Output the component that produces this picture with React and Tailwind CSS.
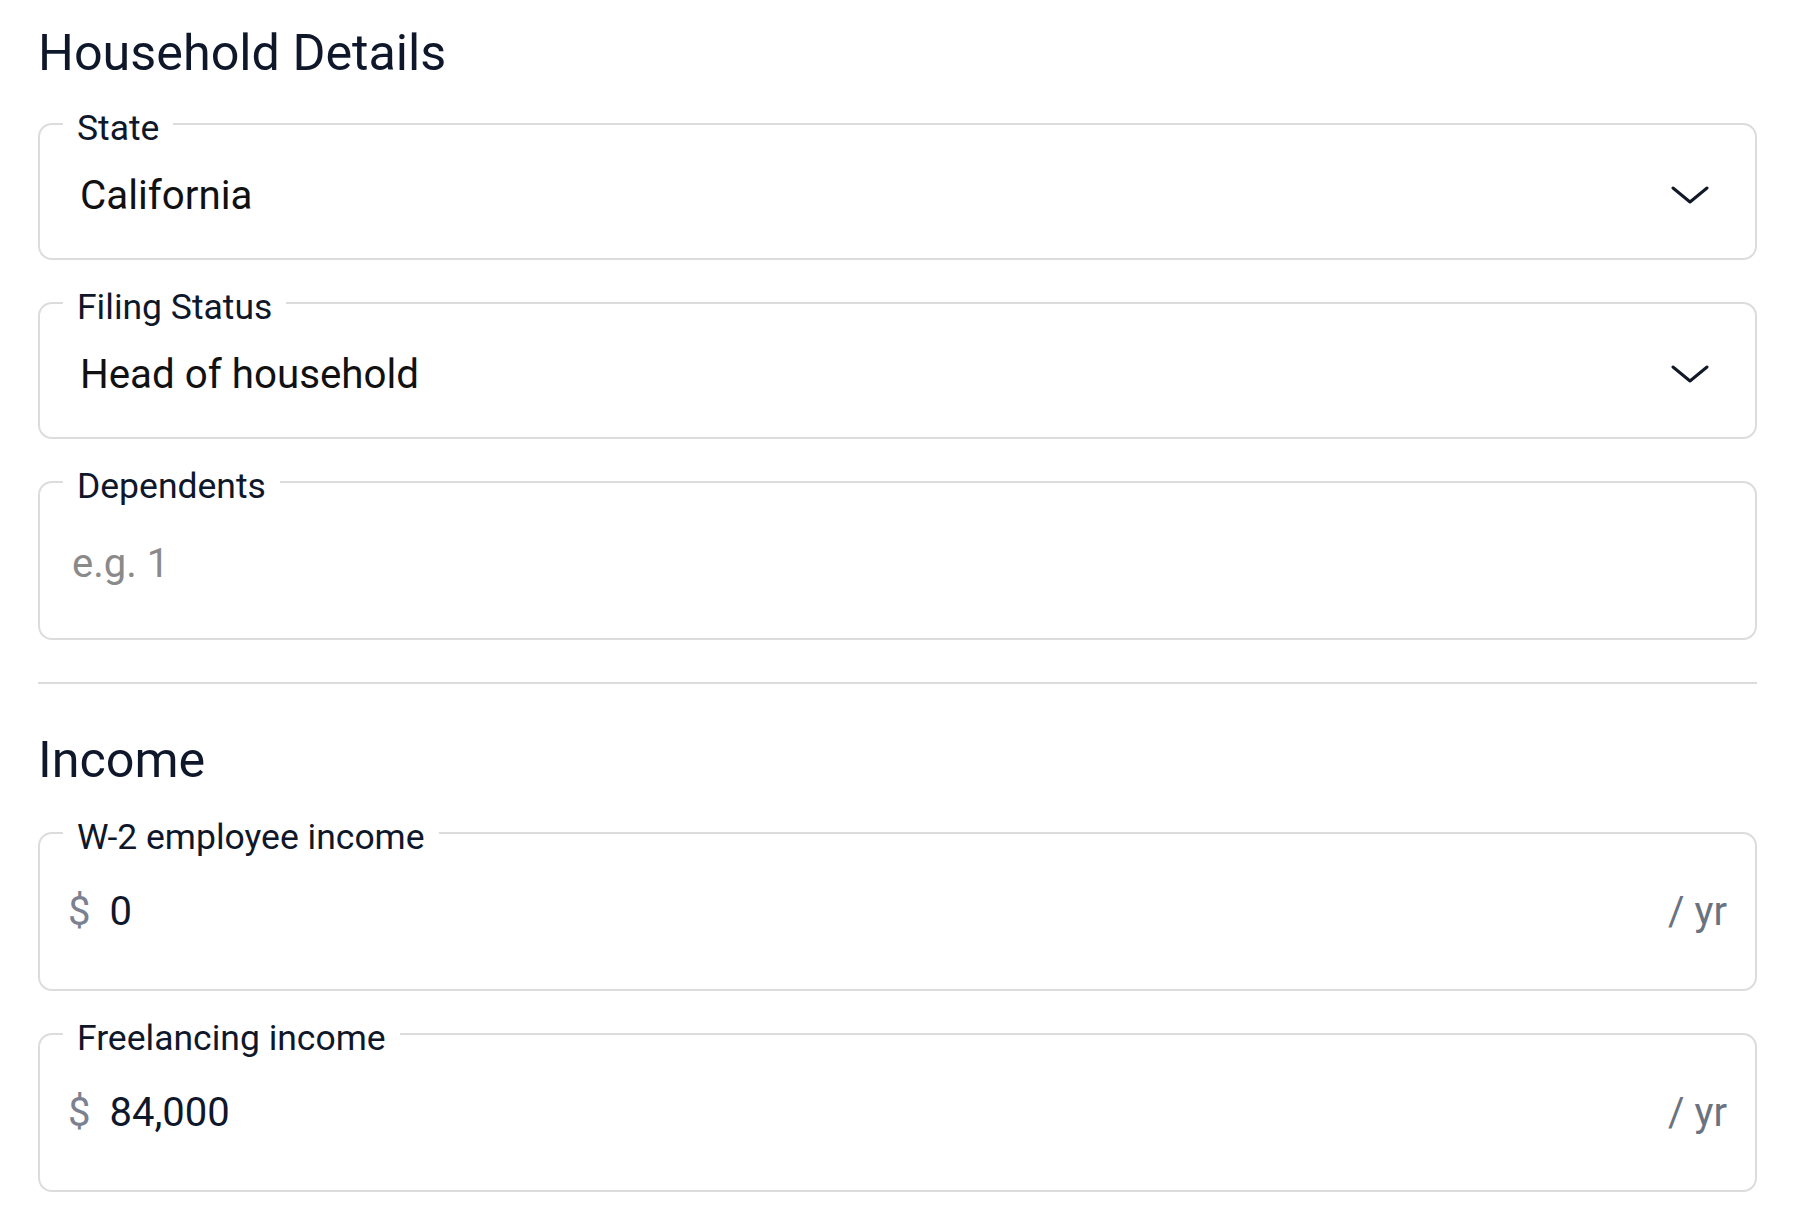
import { useState } from 'react';

function Chevron() {
  return (
    <svg width="38" height="18" viewBox="0 0 38 18" fill="none" className="mb-[3px] shrink-0">
      <polyline points="2,2 19,16 36,2" stroke="#111827" strokeWidth="3" strokeLinecap="round" strokeLinejoin="round" />
    </svg>
  );
}

function Field({ label, children }) {
  return (
    <fieldset className="border-2 border-[#dcdcdc] rounded-[14px] pl-[23px] pr-[23px]">
      <legend className="px-[14px] text-[35.5px] leading-[40px] text-[#0f172a]">
        <span className="relative top-[4px]">{label}</span>
      </legend>
      {children}
    </fieldset>
  );
}

function SelectField({ label, value }) {
  return (
    <Field label={label}>
      <div className="flex items-center justify-between pl-[17px] pr-[23px] pt-[28px] pb-[38px]">
        <span className="text-[40.3px] leading-[48px] text-[#111111]">{value}</span>
        <Chevron />
      </div>
    </Field>
  );
}

function MoneyField({ label, value }) {
  const [amount, setAmount] = useState(value);
  return (
    <Field label={label}>
      <div className="flex items-center pl-[5px] pr-[5px] pt-[35px] pb-[53px] text-[40px] leading-[48px]">
        <span className="text-[#7b8190]">$</span>
        <input
          value={amount}
          onChange={(e) => setAmount(e.target.value)}
          className="ml-[19px] flex-1 min-w-0 h-[48px] bg-transparent outline-none text-[#0f172a]"
        />
        <span className="text-[#6b7280]">/ yr</span>
      </div>
    </Field>
  );
}

export default function App() {
  const [dependents, setDependents] = useState('');

  return (
    <div className="min-h-screen bg-white pl-[38px] pr-[41px] pt-[23px] font-['Roboto',sans-serif]">
      <h2 className="text-[50.3px] leading-[60px] text-[#0f172a]">Household Details</h2>

      <div className="mt-[21px] flex flex-col gap-[23px]">
        <SelectField label="State" value="California" />
        <SelectField label="Filing Status" value="Head of household" />
        <Field label="Dependents">
          <div className="pl-[9px] pr-[9px] pt-[38px] pb-[50px]">
            <input
              value={dependents}
              onChange={(e) => setDependents(e.target.value)}
              placeholder="e.g. 1"
              className="w-full h-[48px] text-[40px] leading-[48px] bg-transparent outline-none text-[#0f172a] placeholder:text-[#8a8a8a]"
            />
          </div>
        </Field>
      </div>

      <div className="mt-[42px] h-[2px] bg-[#dcdcdc]" />

      <h2 className="mt-[46px] text-[50.3px] leading-[60px] text-[#0f172a]">Income</h2>

      <div className="mt-[23px] flex flex-col gap-[23px] pb-[30px]">
        <MoneyField label="W-2 employee income" value="0" />
        <MoneyField label="Freelancing income" value="84,000" />
      </div>
    </div>
  );
}
